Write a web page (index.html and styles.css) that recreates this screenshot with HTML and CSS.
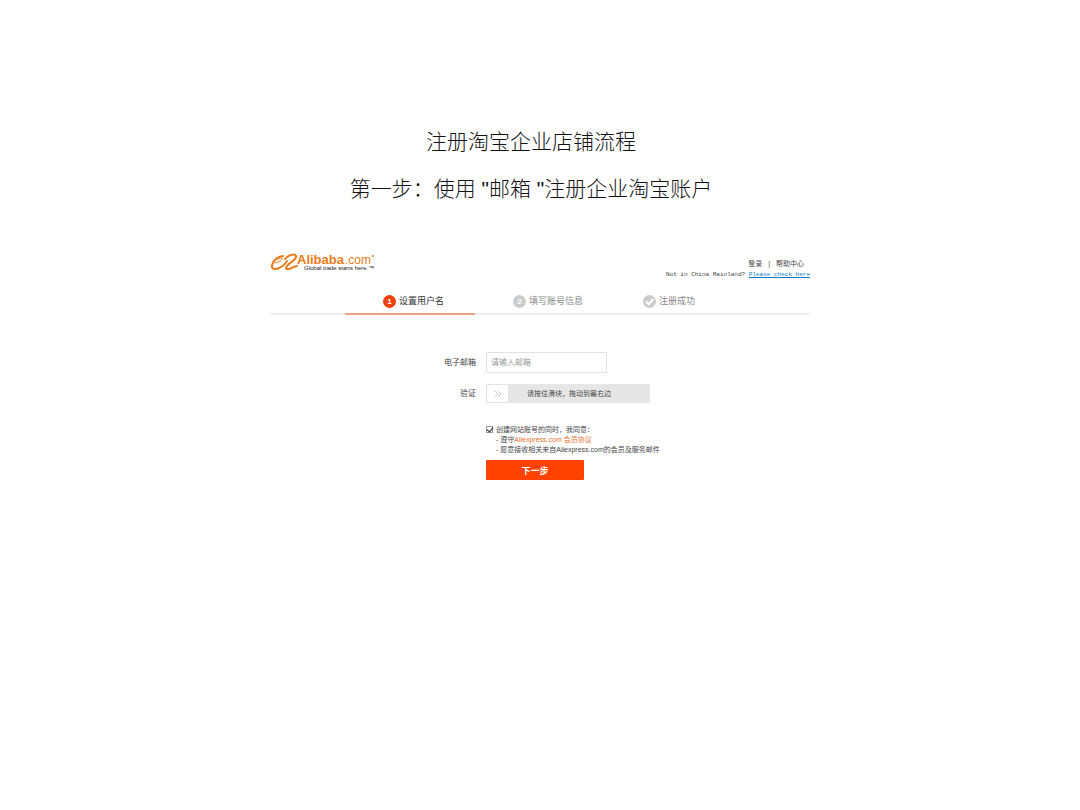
FILE: index.html
```html
<!DOCTYPE html>
<html lang="zh-CN">
<head>
  <meta charset="UTF-8">
  <meta name="viewport" content="width=device-width, initial-scale=1.0">
  <title>注册淘宝企业店铺流程</title>
  <link rel="stylesheet" href="styles.css">
</head>
<body>
  <div class="titles">
    <h1>注册淘宝企业店铺流程</h1>
    <h2>第一步：使用 "邮箱 "注册企业淘宝账户</h2>
  </div>

  <div class="container">
    <header class="header">
      <svg class="logo" viewBox="0 0 106 22" role="img" aria-label="Alibaba.com">
        <g fill="none" stroke="#ec7a18" stroke-linecap="round" stroke-linejoin="round">
          <path d="M13 5C9 5 3 9 2 14C1 18 5 19 9 17C12 16 15 13 17 10" stroke-width="2"/>
          <path d="M5 12C8 12 13 9 12 7C11 6 8 8 8 9" stroke-width="1"/>
          <path d="M15 8C18 4 25 2 26 5C27 8 21 11 18 14C16 16 15 18 17 18C20 19 22 16 27 15" stroke-width="2"/>
        </g>
        <text class="logo-name" x="27" y="13">Alibaba</text>
        <text class="logo-com" x="75" y="13">.com</text>
        <circle cx="103" cy="5" r="1" fill="#ec7a18"/>
        <text class="logo-tag" x="34" y="19">Global trade starts here.™</text>
      </svg>
      <div class="header-links">
        <div class="account"><a href="#">登录</a><span>|</span><a href="#">帮助中心</a></div>
        <div class="region">Not in China Mainland? <a href="#">Please check here</a></div>
      </div>
    </header>

    <ol class="steps">
      <li class="step active"><span class="dot">1</span>设置用户名</li>
      <li class="step"><span class="dot">2</span>填写账号信息</li>
      <li class="step">
        <span class="dot">
          <svg viewBox="0 0 13 13"><path d="M3 6.5L5.8 9.2L10.2 4.2" fill="none" stroke="#fff" stroke-width="2"/></svg>
        </span>注册成功
      </li>
    </ol>

    <form class="form">
      <label class="label" for="email">电子邮箱</label>
      <input class="email" type="email" id="email" placeholder="请输入邮箱">

      <label class="label" for="verify">验证</label>
      <div class="verify">
        <input type="range" id="verify" min="0" max="100" value="0">
        <svg class="arrows" viewBox="0 0 8 8"><path d="M1 1L4 4L1 7M4 1L7 4L4 7" fill="none" stroke="#bbb" stroke-width="0.8"/></svg>
        <span class="verify-text">请按住滑块，拖动到最右边</span>
      </div>

      <div class="agree">
        <input type="checkbox" id="agree" checked>
        <div class="agree-text">
          <label for="agree">创建网站账号的同时，我同意：</label>
          <ul>
            <li>- 遵守<a href="#">Aliexpress.com 会员协议</a></li>
            <li>- 愿意接收相关来自Aliexpress.com的会员及服务邮件</li>
          </ul>
        </div>
      </div>

      <button class="next" type="button">下一步</button>
    </form>
  </div>
</body>
</html>
```
FILE: styles.css
```css
* {
  box-sizing: border-box;
}

body {
  margin: 0;
  background-color: #fff;
  color: #444;
  font-family: "Liberation Sans", "Noto Sans CJK SC", sans-serif;
  font-size: 7px;
  line-height: 10px;
}

a {
  color: inherit;
  text-decoration: none;
}

.titles {
  padding: 118px 18px 0 0;
  text-align: center;
  color: #111;
}

h1,
h2 {
  margin: 0;
  font-size: 21px;
  font-weight: 300;
  line-height: 47px;
}

.container {
  max-width: 540px;
  margin: 0 auto;
  padding-top: 39px;
}

.header {
  display: flex;
  justify-content: space-between;
}

.logo {
  width: 106px;
  height: 22px;
}

.logo-name,
.logo-com {
  fill: #ec7a18;
  font-size: 12px;
}

.logo-name {
  font-size: 13px;
  font-weight: bold;
}

.logo-tag {
  fill: #222;
  font-size: 6px;
}

.header-links {
  padding-top: 8px;
  text-align: right;
}

.account {
  display: flex;
  justify-content: flex-end;
  gap: 6px;
  padding-right: 6px;
}

.region {
  font-family: "Liberation Mono", monospace;
  font-size: 6px;
  line-height: 12px;
}

.region a {
  color: #0a7bc4;
  text-decoration: underline;
}

.steps {
  display: flex;
  justify-content: center;
  margin: 14px 0 0;
  padding: 0;
  border-bottom: 2px solid #eee;
  list-style: none;
}

.step {
  display: flex;
  gap: 3px;
  width: 130px;
  height: 20px;
  margin-bottom: -2px;
  padding-left: 38px;
  color: #888;
  font-size: 9px;
  line-height: 13px;
}

.step.active {
  border-bottom: 2px solid #e9a284;
  color: #333;
}

.dot {
  width: 13px;
  height: 13px;
  border-radius: 50%;
  background-color: #ccc;
  color: #fff;
  font-size: 8px;
  font-weight: bold;
  text-align: center;
}

.dot svg {
  display: block;
}

.active .dot {
  background-color: #f0420c;
}

.form {
  display: grid;
  grid-template-columns: 206px 1fr;
  column-gap: 10px;
  align-items: center;
  justify-items: start;
  padding-top: 37px;
}

.label {
  justify-self: end;
  font-size: 8px;
}

.email {
  width: 121px;
  height: 21px;
  margin-bottom: 11px;
  padding: 0 4px;
  border: 1px solid #e2e2e2;
  font-family: inherit;
  font-size: 8px;
}

.label[for="email"] {
  margin-bottom: 11px;
}

.email::placeholder {
  color: #999;
}

.verify {
  position: relative;
  width: 164px;
  height: 19px;
}

.verify input {
  display: block;
  width: 100%;
  height: 100%;
  margin: 0;
  background-color: #e6e6e6;
  appearance: none;
}

.verify input::-webkit-slider-thumb {
  width: 23px;
  height: 19px;
  border: 1px solid #e2e2e2;
  background-color: #fff;
  appearance: none;
}

.arrows {
  position: absolute;
  top: 6px;
  left: 8px;
  width: 8px;
  height: 8px;
  pointer-events: none;
}

.verify-text {
  position: absolute;
  top: 5px;
  left: 41px;
  pointer-events: none;
}

.agree {
  display: flex;
  grid-column: 2;
  gap: 3px;
  padding-top: 22px;
}

.agree input {
  width: 7px;
  height: 7px;
  margin: 1px 0 0;
  border: 1px solid #999;
  appearance: none;
}

.agree input:checked::before {
  content: "";
  display: block;
  width: 3px;
  height: 5px;
  margin: -1px 0 0 1px;
  border: solid #222;
  border-width: 0 1px 1px 0;
  transform: rotate(40deg);
}

.agree label {
  display: block;
}

.agree ul {
  margin: 0;
  padding: 0;
  list-style: none;
}

.agree a {
  color: #e8702e;
}

.next {
  grid-column: 2;
  width: 98px;
  height: 20px;
  margin-top: 5px;
  padding: 0;
  border: 0;
  border-radius: 1px;
  background-color: #ff4200;
  color: #fff;
  font-family: inherit;
  font-size: 9px;
  font-weight: bold;
}
```
